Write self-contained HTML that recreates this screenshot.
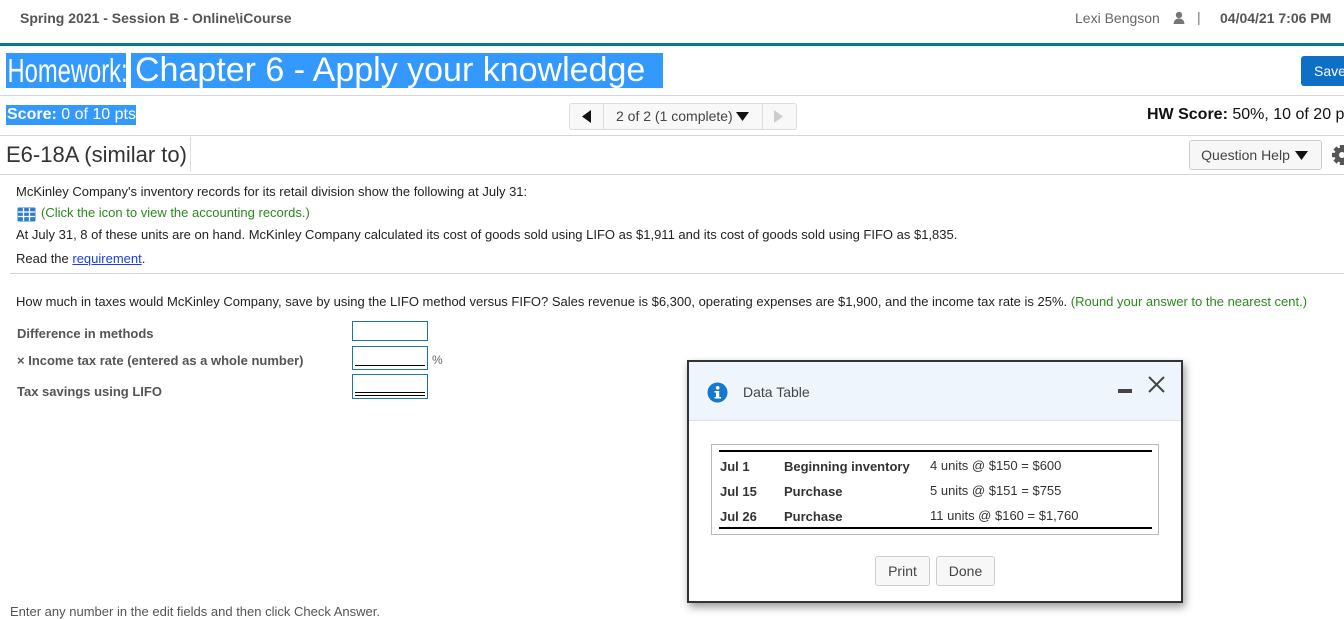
<!DOCTYPE html>
<html><head><style>
*{margin:0;padding:0;box-sizing:border-box}
body{width:1344px;height:612px;overflow:hidden;background:#fff;font-family:"Liberation Sans",Arial,sans-serif;position:relative;color:#222}
.a{position:absolute;white-space:nowrap}
.hl{background:#3399ff;color:#fff}
.line{position:absolute;left:0;right:0;height:1px;background:#d3d6de}
.inp{position:absolute;left:352px;width:76px;border:1px solid #1a7a9a;background:#fff}
.btn{position:absolute;border:1px solid #ccc;border-radius:3px;background:#f7f7f7;color:#444;font-size:14px;text-align:center}
</style></head><body>
<div class="a" style="left:20px;top:10px;font-size:14px;font-weight:bold;color:#555">Spring 2021 - Session B - Online\iCourse</div>
<div class="a" style="left:1075px;top:10px;font-size:14px;color:#666">Lexi Bengson</div>
<svg class="a" style="left:1173px;top:11px" width="12" height="14" viewBox="0 0 12 14"><circle cx="6" cy="4" r="3.2" fill="#777"/><path d="M0.5 13 Q1 7.5 6 7.5 Q11 7.5 11.5 13Z" fill="#777"/></svg>
<div class="a" style="left:1197px;top:9px;font-size:14px;color:#777">|</div>
<div class="a" style="left:1220px;top:10px;font-size:14px;font-weight:bold;color:#555">04/04/21 7:06 PM</div>
<div class="a" style="left:0;top:43px;width:1344px;height:3px;background:#007c92"></div>
<div class="a hl" style="left:6px;top:53px;height:35px;width:120px;overflow:hidden"><span style="display:inline-block;font-size:33px;line-height:35px;transform:scaleX(0.72);transform-origin:0 0;padding-left:2px">Homework:</span></div>
<div class="a hl" style="left:131px;top:53px;height:35px;width:532px;font-size:34px;line-height:35px;padding-left:4px">Chapter 6 - Apply your knowledge</div>
<div class="a" style="left:1301px;top:56px;width:50px;height:30px;background:#0e6fc7;border-radius:3px;color:#fff;font-size:14px;line-height:30px;padding-left:13px">Save</div>
<div class="line" style="top:95px"></div>
<div class="a hl" style="left:6px;top:105px;width:130px;height:20px;font-size:16px;line-height:20px;padding-left:1px"><b>Score:</b> 0 of 10 pts</div>
<div class="a" style="left:569px;top:103px;width:228px;height:27px;border:1px solid #ddd;border-radius:3px;background:#f8f8f8"></div>
<div class="a" style="left:603px;top:103px;width:1px;height:27px;background:#ddd"></div>
<div class="a" style="left:762px;top:103px;width:1px;height:27px;background:#ddd"></div>
<svg class="a" style="left:582px;top:110px" width="10" height="13"><path d="M9 0V13L0 6.5Z" fill="#111"/></svg>
<div class="a" style="left:616px;top:108px;font-size:14px;color:#444">2 of 2 (1 complete)</div>
<svg class="a" style="left:736px;top:112px" width="13" height="9"><path d="M0 0H13L6.5 9Z" fill="#111"/></svg>
<svg class="a" style="left:774px;top:110px" width="9" height="13"><path d="M0 0V13L9 6.5Z" fill="#ccc"/></svg>
<div class="a" style="left:1147px;top:106px;font-size:16px;color:#111"><b>HW Score:</b> 50%, 10 of 20 pts</div>
<div class="line" style="top:135px"></div>
<div class="a" style="left:6px;top:142px;font-size:22px;color:#333">E6-18A (similar to)</div>
<div class="a" style="left:190px;top:137px;width:1px;height:35px;background:#ddd"></div>
<div class="btn" style="left:1189px;top:140px;width:133px;height:30px;line-height:28px;padding-right:20px">Question Help</div>
<svg class="a" style="left:1295px;top:151px" width="13" height="9"><path d="M0 0H13L6.5 9Z" fill="#111"/></svg>
<svg class="a" style="left:1331px;top:144px" width="22" height="22" viewBox="-11 -11 22 22"><g fill="#555"><rect x="-2.2" y="-10" width="4.4" height="20"/><rect x="-2.2" y="-10" width="4.4" height="20" transform="rotate(45)"/><rect x="-2.2" y="-10" width="4.4" height="20" transform="rotate(90)"/><rect x="-2.2" y="-10" width="4.4" height="20" transform="rotate(135)"/><circle r="7.5"/></g><circle r="3" fill="#fff"/></svg>
<div class="line" style="top:174px"></div>
<div style="font-size:13px;color:#222">
<div class="a" style="left:16px;top:184px">McKinley Company's inventory records for its retail division show the following at July 31:</div>
<svg class="a" style="left:17px;top:207px" width="20" height="15"><rect x="0.5" y="0.5" width="18" height="14" fill="#2e7dd1" rx="1"/><path d="M1 5H18M1 9.5H18M6.5 1V14M12.5 1V14" stroke="#fff" stroke-width="1.3"/></svg>
<div class="a" style="left:41px;top:205px;color:#2a8a1c">(Click the icon to view the accounting records.)</div>
<div class="a" style="left:16px;top:227px">At July 31, 8 of these units are on hand. McKinley Company calculated its cost of goods sold using LIFO as $1,911 and its cost of goods sold using FIFO as $1,835.</div>
<div class="a" style="left:16px;top:251px">Read the <span style="color:#1a3ee8;text-decoration:underline">requirement</span>.</div>
</div>
<div class="a" style="left:10px;top:273px;width:1334px;height:1px;background:#d3d6de"></div>
<div class="a" style="left:16px;top:294px;font-size:13px;color:#222">How much in taxes would McKinley Company, save by using the LIFO method versus FIFO? Sales revenue is $6,300, operating expenses are $1,900, and the income tax rate is 25%. <span style="color:#2a8a1c">(Round your answer to the nearest cent.)</span></div>
<div style="font-size:13px;font-weight:bold;color:#555">
<div class="a" style="left:17px;top:326px">Difference in methods</div>
<div class="a" style="left:17px;top:353px">× Income tax rate (entered as a whole number)</div>
<div class="a" style="left:17px;top:384px">Tax savings using LIFO</div>
</div>
<div class="inp" style="top:321px;height:20px"></div>
<div class="inp" style="top:346px;height:24px"><div style="position:absolute;left:2px;right:2px;top:18px;height:1px;background:#000"></div></div>
<div class="a" style="left:432px;top:353px;font-size:12px;color:#666">%</div>
<div class="inp" style="top:374px;height:25px"><div style="position:absolute;left:2px;right:2px;top:17px;height:1px;background:#000"></div><div style="position:absolute;left:2px;right:2px;top:20px;height:1px;background:#000"></div></div>
<div class="a" style="left:10px;top:604px;font-size:13px;color:#555">Enter any number in the edit fields and then click Check Answer.</div>

<div class="a" style="left:687px;top:360px;width:496px;height:243px;border:2px solid #333;background:#fff;box-shadow:2px 4px 8px rgba(0,0,0,.4)">
<div style="position:absolute;left:0;top:0;right:0;height:59px;background:#eff5fd;border-bottom:1px solid #d6e2ef"></div>
<svg class="a" style="left:18px;top:20px" width="21" height="21"><circle cx="10.5" cy="10.5" r="10" fill="#1479cc"/><rect x="9" y="9" width="3.2" height="7.5" fill="#fff"/><rect x="7.5" y="9" width="4" height="1.5" fill="#fff"/><rect x="7.5" y="15" width="6.5" height="1.5" fill="#fff"/><circle cx="10.7" cy="5.8" r="1.8" fill="#fff"/></svg>
<div class="a" style="left:54px;top:22px;font-size:14px;color:#444">Data Table</div>
<div class="a" style="left:429px;top:27px;width:14px;height:4px;background:#444"></div>
<svg class="a" style="left:459px;top:14px" width="17" height="17"><path d="M1 1L16 16M16 1L1 16" stroke="#444" stroke-width="2"/></svg>
<div class="a" style="left:22px;top:82px;width:448px;height:91px;border:1px solid #bbb"></div>
<div class="a" style="left:30px;top:88px;width:433px;height:2px;background:#000"></div>
<div class="a" style="left:30px;top:165px;width:433px;height:2px;background:#000"></div>
<div style="font-size:13px;color:#333">
<b class="a" style="left:31px;top:97px">Jul 1</b><b class="a" style="left:95px;top:97px">Beginning inventory</b><span class="a" style="left:241px;top:96px">4 units @ $150 = $600</span>
<b class="a" style="left:31px;top:122px">Jul 15</b><b class="a" style="left:95px;top:122px">Purchase</b><span class="a" style="left:241px;top:121px">5 units @ $151 = $755</span>
<b class="a" style="left:31px;top:147px">Jul 26</b><b class="a" style="left:95px;top:147px">Purchase</b><span class="a" style="left:241px;top:146px">11 units @ $160 = $1,760</span>
</div>
<div class="btn" style="left:186px;top:194px;width:55px;height:30px;line-height:28px">Print</div>
<div class="btn" style="left:247px;top:194px;width:59px;height:30px;line-height:28px">Done</div>
</div>
</body></html>
